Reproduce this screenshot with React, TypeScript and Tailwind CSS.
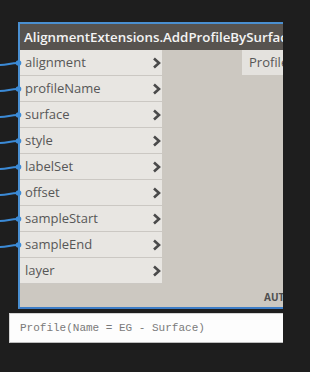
import React from "react";

const inputs = [
  "alignment",
  "profileName",
  "surface",
  "style",
  "labelSet",
  "offset",
  "sampleStart",
  "sampleEnd",
  "layer",
];

function Chevron() {
  return (
    <svg width="9" height="12" viewBox="0 0 9 12" className="shrink-0">
      <polyline
        points="2,1.5 7,6 2,10.5"
        fill="none"
        stroke="#4a4a4a"
        strokeWidth="2.6"
      />
    </svg>
  );
}

export default function App() {
  const wireYs = inputs.slice(0, 8).map((_, i) => 63 + 26 * i);
  return (
    <div className="w-[310px] h-[372px] bg-[#1e1e1e] overflow-hidden" style={{ fontFamily: '"Open Sans", "Noto Sans", sans-serif' }}>
      <div className="relative w-[283px] h-full overflow-hidden pt-[22px]">
        <svg className="absolute left-0 top-0" width="22" height="372">
          {wireYs.map((y, i) => (
            <g key={i}>
              <path
                d={`M0 ${y + 2} C 8 ${y + 2}, 10 ${y}, 18 ${y}`}
                fill="none"
                stroke="#3b8ad6"
                strokeWidth="2.2"
              />
              <circle cx="18.5" cy={y} r="2.8" fill="#3b8ad6" />
            </g>
          ))}
        </svg>
        <div className="ml-[18px] w-[283px] border-2 border-[#4a8fd0] border-b-[#3c7cc6]">
          <div className="h-[26px] bg-[#57534f] text-[#f4f4f4] text-[13.3px] font-semibold leading-[26px] pl-[4px] whitespace-nowrap overflow-hidden">
            AlignmentExtensions.AddProfileBySurface
          </div>
          <div className="flex h-[257px] bg-[#ccc8c1]">
            <div className="w-[142px] flex flex-col">
              {inputs.map((name) => (
                <div
                  key={name}
                  className="h-[26px] bg-[#e8e6e2] border-b border-[#cbc8c3] flex items-center justify-between pl-[5px] pr-[1px]"
                >
                  <span className="text-[13px] text-[#575757] leading-none">{name}</span>
                  <Chevron />
                </div>
              ))}
            </div>
            <div className="flex-1 flex flex-col items-end justify-between">
              <div className="w-[57px] h-[25px] bg-[#e4e2de] text-[13px] text-[#575757] leading-[25px] pl-[7px]">
                Profile
              </div>
              <div className="w-[35px] pb-[5px] text-[10px] font-bold text-[#4f4f4f] leading-none">
                AUTO
              </div>
            </div>
          </div>
        </div>
        <div className="mt-[4px] ml-[9px] w-[300px] h-[30px] bg-[#fdfdfd] border border-[#d4d4d4] border-b-[#bdbdbd] flex items-center pl-[10px]">
          <span className="text-[11px] text-[#7a7a7a] whitespace-nowrap" style={{ fontFamily: '"Liberation Mono", "DejaVu Sans Mono", monospace' }}>
            Profile(Name = EG - Surface)
          </span>
        </div>
      </div>
    </div>
  );
}
